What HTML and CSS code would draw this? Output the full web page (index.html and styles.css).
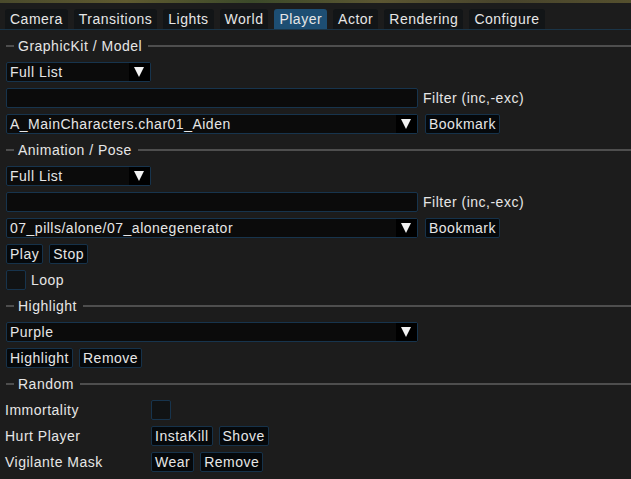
FILE: index.html
```html
<!DOCTYPE html>
<html>
<head>
<meta charset="utf-8">
<link rel="stylesheet" href="styles.css">
</head>
<body>
<div class="strip"></div>
<div class="tabs">
  <div class="tab">Camera</div>
  <div class="tab">Transitions</div>
  <div class="tab">Lights</div>
  <div class="tab">World</div>
  <div class="tab active">Player</div>
  <div class="tab">Actor</div>
  <div class="tab">Rendering</div>
  <div class="tab">Configure</div>
</div>
<div class="content">
  <div class="sep"><span class="dash"></span><span class="sep-text">GraphicKit / Model</span><span class="line"></span></div>
  <div class="row"><div class="combo short"><span class="val">Full List</span><span class="arrow"></span></div></div>
  <div class="row"><div class="input wide"></div><span class="label">Filter (inc,-exc)</span></div>
  <div class="row"><div class="combo wide"><span class="val">A_MainCharacters.char01_Aiden</span><span class="arrow"></span></div><button class="btn bm">Bookmark</button></div>

  <div class="sep"><span class="dash"></span><span class="sep-text">Animation / Pose</span><span class="line"></span></div>
  <div class="row"><div class="combo short"><span class="val">Full List</span><span class="arrow"></span></div></div>
  <div class="row"><div class="input wide"></div><span class="label">Filter (inc,-exc)</span></div>
  <div class="row"><div class="combo wide"><span class="val">07_pills/alone/07_alonegenerator</span><span class="arrow"></span></div><button class="btn bm">Bookmark</button></div>
  <div class="row"><button class="btn">Play</button><button class="btn">Stop</button></div>
  <div class="row"><div class="check"></div><span class="label chk-label">Loop</span></div>

  <div class="sep"><span class="dash"></span><span class="sep-text">Highlight</span><span class="line"></span></div>
  <div class="row"><div class="combo wide"><span class="val">Purple</span><span class="arrow"></span></div></div>
  <div class="row"><button class="btn">Highlight</button><button class="btn">Remove</button></div>

  <div class="sep"><span class="dash"></span><span class="sep-text">Random</span><span class="line"></span></div>
  <div class="grid">
    <span class="glabel">Immortality</span><div class="row"><div class="check"></div></div>
    <span class="glabel">Hurt Player</span><div class="row"><button class="btn">InstaKill</button><button class="btn">Shove</button></div>
    <span class="glabel">Vigilante Mask</span><div class="row"><button class="btn">Wear</button><button class="btn">Remove</button></div>
  </div>
</div>
</body>
</html>
```

FILE: styles.css
```css
* { box-sizing: border-box; }
html, body {
  margin: 0;
  padding: 0;
  background: #1c1c1c;
  color: #e6e6e6;
  font-family: "Liberation Sans", Arial, sans-serif;
  font-size: 14px;
  letter-spacing: 0.5px;
  width: 631px;
  height: 479px;
  overflow: hidden;
}
.strip {
  height: 3px;
  background: linear-gradient(90deg, #4a4a2c 0%, #5f5a30 20%, #3c4a2a 40%, #5c5632 60%, #48442c 80%, #55502e 100%);
}
.tabs {
  display: flex;
  gap: 6px;
  padding: 6px 0 0 5px;
  border-bottom: 1px solid #1a3447;
  height: 27px;
}
.tab {
  height: 20px;
  line-height: 20px;
  padding: 0 5px;
  background: #121517;
  border-radius: 3px 3px 0 0;
  white-space: nowrap;
}
.tab.active { background: #1d4e73; }
.content {
  display: flex;
  flex-direction: column;
  gap: 6px;
  padding: 6px 0 0 6px;
}
.sep {
  height: 20px;
  display: flex;
  align-items: center;
}
.dash { width: 8px; height: 2px; background: #4e4e4e; }
.sep-text { margin: 0 6px 0 4px; white-space: nowrap; }
.line { flex: 1; height: 2px; background: #4e4e4e; }
.row {
  height: 20px;
  display: flex;
  align-items: center;
  gap: 6px;
}
.combo, .input {
  height: 20px;
  background: #0b0b0b;
  border: 1px solid #17344d;
  border-radius: 2px;
  display: flex;
  align-items: center;
}
.short { width: 145px; }
.wide { width: 412px; }
.val { flex: 1; padding-left: 3px; white-space: nowrap; overflow: hidden; }
.arrow {
  width: 21px;
  height: 18px;
  background: #000;
  position: relative;
}
.arrow::after {
  content: "";
  position: absolute;
  left: 5px;
  top: 4px;
  border-left: 5.5px solid transparent;
  border-right: 5.5px solid transparent;
  border-top: 10px solid #f2f2f2;
}
.label { margin-left: -1px; white-space: nowrap; }
.chk-label { margin-left: -1px; }
.btn {
  height: 20px;
  padding: 0 3px;
  background: #05080b;
  border: 1px solid #16324a;
  border-radius: 2px;
  color: #e6e6e6;
  font: inherit;
  letter-spacing: inherit;
  line-height: 18px;
}
.bm { margin-left: 1px; }
.check {
  width: 20px;
  height: 20px;
  background: #111314;
  border: 1px solid #17344d;
  border-radius: 2px;
}
.grid {
  display: grid;
  grid-template-columns: 146px auto;
  row-gap: 6px;
  margin-left: -1px;
}
.glabel { height: 20px; line-height: 20px; white-space: nowrap; }
.grid .row { justify-content: flex-start; }
```
